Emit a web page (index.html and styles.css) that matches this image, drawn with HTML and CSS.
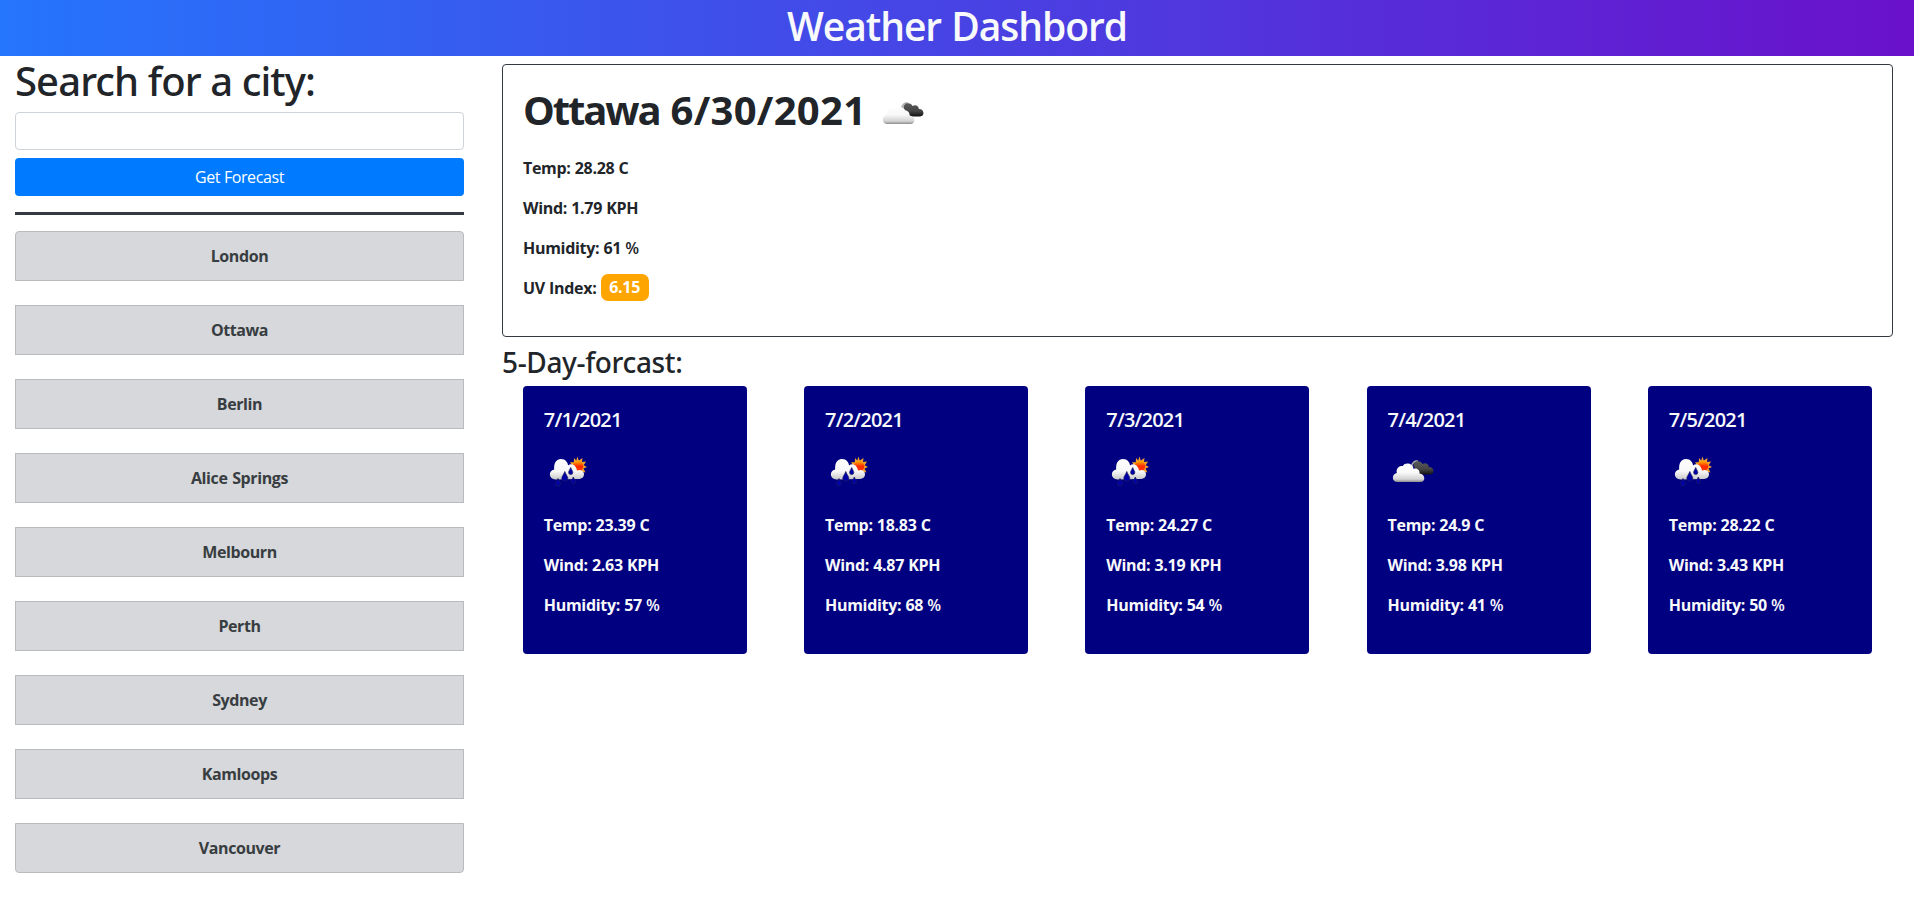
FILE: index.html
```html
<!DOCTYPE html>
<html lang="en">
<head>
<meta charset="utf-8">
<title>Weather Dashbord</title>
<link rel="stylesheet" href="styles.css">
</head>
<body>
<svg class="defs" width="0" height="0" aria-hidden="true">
  <defs>
    <linearGradient id="cloud" x1="0" y1="0" x2="0" y2="1">
      <stop offset="0" stop-color="#fff"/><stop offset=".5" stop-color="#f8f8f8"/><stop offset=".85" stop-color="#d2d2d2"/><stop offset="1" stop-color="#8c8c8c"/>
    </linearGradient>
    <linearGradient id="bright" x1="0" y1="0" x2="0" y2="1">
      <stop offset="0" stop-color="#fff"/><stop offset=".6" stop-color="#f8f8f8"/><stop offset="1" stop-color="#c8c8c8"/>
    </linearGradient>
    <linearGradient id="dark" x1="0" y1="0" x2="0" y2="1">
      <stop offset="0" stop-color="#5a5a5a"/><stop offset=".6" stop-color="#444"/><stop offset="1" stop-color="#111"/>
    </linearGradient>
    <linearGradient id="sun" x1="0" y1="0" x2="0" y2="1">
      <stop offset="0" stop-color="#ffb000"/><stop offset=".5" stop-color="#ff2a00"/><stop offset="1" stop-color="#ff3c00"/>
    </linearGradient>
    <symbol id="clouds" viewBox="0 0 50 50">
      <path d="M23.500 21C24 16.500 27 14.500 30 15.200" fill="none" stroke="#aaa" stroke-width="1.500"/>
      <path d="M25.500 20C25 15 32.500 13.500 34.500 18C38 16 41 18.500 40.800 21C46 20.500 47.500 28 42 28.500H32C31 26 29.500 25.500 28.500 25.500C28 22.500 26.500 21.500 25.500 20Z" fill="url(#dark)"/>
      <path d="M9.500 36C3.500 36 3.500 28 8.800 27C7.500 21 13 19.500 14.800 20C17 15.800 25 17 25.600 23C29 21.500 32 24.500 31.500 27.500C37.500 28 38 36 32.500 36Z" fill="url(#cloud)"/>
    </symbol>
    <symbol id="rain" viewBox="0 0 50 50">
      <path d="M33.300 10.500L34.800 14.500L38.500 12L38 16L42 15.500L39.700 19.200L43 21L39.500 22.500L41.500 26.500L37 25.600L36 29L33.300 26.500L30 28L29.800 24L26 23L28.500 20L26 16.300L29.800 16.300L30 12L32.300 14.500Z" fill="#f4a22a"/>
      <circle cx="34" cy="20.300" r="5.300" fill="url(#sun)"/>
      <path d="M11.500 33.500C4.500 33.500 4 24.500 10.200 23.500C9.800 18 11.500 13.200 17 13C21.500 13 24 16.500 24 19.500C27 17 32 18.500 33 24.500C37.500 22.500 41.500 26 39.500 30.500C38.500 32.700 36 33 33 33Z" fill="url(#bright)"/>
      <path d="M20.800 25.500C19.500 29 17.800 30.300 17.800 32.300A3 3 0 0 0 23.800 32.300C23.800 30.300 22 29 20.800 25.500ZM26.700 21.500C25.700 24 24.600 25 24.600 26.500A2.100 2.100 0 0 0 28.800 26.500C28.800 25 27.700 24 26.700 21.500ZM14 32.500C13 35 11.400 36 11.400 37.500A2.500 2.500 0 0 0 16.400 37.500C16.400 36 15 35 14 32.500ZM29.300 31C28.300 33.500 27.200 34.500 27.200 35.800A2.100 2.100 0 0 0 31.400 35.800C31.400 34.500 30.300 33.500 29.300 31Z" fill="#0000a8" stroke="#1c1c58" stroke-width=".7"/>
    </symbol>
  </defs>
</svg>
<header class="banner"><h1 class="title">Weather Dashbord</h1></header>
<div class="layout">
  <aside class="sidebar">
    <h1 class="search-title">Search for a city:</h1>
    <input class="field" type="text" aria-label="City">
    <button class="submit" type="button">Get Forecast</button>
    <hr class="rule">
    <ul class="cities">
      <li>London</li><li>Ottawa</li><li>Berlin</li><li>Alice Springs</li><li>Melbourn</li><li>Perth</li><li>Sydney</li><li>Kamloops</li><li>Vancouver</li>
    </ul>
  </aside>
  <main class="weather">
    <section class="today">
      <h1 class="today-title"><span class="city">Ottawa</span><span class="date">6/30/2021</span><svg class="icon"><use href="#clouds"/></svg></h1>
      <p>Temp: 28.28 C</p>
      <p>Wind: 1.79 KPH</p>
      <p>Humidity: 61 <span class="pct">%</span></p>
      <p>UV Index: <span class="uv">6.15</span></p>
    </section>
    <h3 class="forecast-title">5-Day-forcast:</h3>
    <section class="days">
      <article class="day"><h5>7/1/2021</h5><svg class="icon"><use href="#rain"/></svg><p>Temp: 23.39 C</p><p>Wind: 2.63 KPH</p><p>Humidity: 57 <span class="pct">%</span></p></article>
      <article class="day"><h5>7/2/2021</h5><svg class="icon"><use href="#rain"/></svg><p>Temp: 18.83 C</p><p>Wind: 4.87 KPH</p><p>Humidity: 68 <span class="pct">%</span></p></article>
      <article class="day"><h5>7/3/2021</h5><svg class="icon"><use href="#rain"/></svg><p>Temp: 24.27 C</p><p>Wind: 3.19 KPH</p><p>Humidity: 54 <span class="pct">%</span></p></article>
      <article class="day"><h5>7/4/2021</h5><svg class="icon"><use href="#clouds"/></svg><p>Temp: 24.9 C</p><p>Wind: 3.98 KPH</p><p>Humidity: 41 <span class="pct">%</span></p></article>
      <article class="day"><h5>7/5/2021</h5><svg class="icon"><use href="#rain"/></svg><p>Temp: 28.22 C</p><p>Wind: 3.43 KPH</p><p>Humidity: 50 <span class="pct">%</span></p></article>
    </section>
  </main>
</div>
</body>
</html>
```
FILE: styles.css
```css
*, *::before, *::after { box-sizing: border-box; }
body { margin: 0; background: #fff; color: #212529; font: 400 16px/24px "Segoe UI", "Open Sans", "Noto Sans", sans-serif; }
h1, h3, h5, p { margin: 0; }
.defs { position: absolute; }
.banner { height: 56px; padding-top: 2px; background: linear-gradient(to right, #2575fc, #6a11cb); }
.title { font-size: 39px; line-height: 48px; font-weight: 600; text-align: center; color: #f8f9fa; letter-spacing: -1.05px; word-spacing: 1px; }
.layout { display: flex; }
.sidebar { width: 479px; padding: 0 15px; }
.search-title { height: 48px; margin-bottom: 8px; padding-top: 1px; font-family: "Segoe UI", "Noto Sans", sans-serif; font-size: 40px; line-height: 48px; font-weight: 500; white-space: nowrap; letter-spacing: -0.9px; }
.field { display: block; width: 449px; height: 38px; border: 1px solid #ced4da; border-radius: 4px; background: #fff; }
.submit { display: block; width: 449px; height: 38px; margin-top: 8px; padding: 0; border: 0; border-radius: 4px; background: #007bff; color: #fff; font: inherit; letter-spacing: -0.4px; }
.rule { height: 3px; margin: 16px 0; border: 0; background: #343a40; width: 449px; }
.cities { display: flex; flex-direction: column; gap: 24px; width: 449px; margin: 0; padding: 0; list-style: none; }
.cities li { height: 50px; padding: 12px 0; border: 1px solid #b9bbbe; background: #d6d8db; color: #383d41; text-align: center; font-weight: 700; letter-spacing: -0.4px; word-spacing: 1px; }
.cities li:first-child { border-radius: 4px 4px 0 0; }
.cities li:last-child { border-radius: 0 0 4px 4px; }
.weather { width: 1391px; margin-left: 23px; padding-top: 8px; }
.today { height: 273px; padding: 20px; border: 1px solid #343a40; border-radius: 4px; }
.today-title { display: flex; height: 71px; padding-top: 1px; font-size: 40px; line-height: 48px; font-weight: 700; }
.city { letter-spacing: -2.1px; }
.date { margin-left: 11px; letter-spacing: 0.3px; }
.today-title .icon { margin: 2px 0 0 12px; }
.icon { display: block; width: 50px; height: 50px; }
p { height: 24px; margin-bottom: 16px; font-weight: 700; letter-spacing: -0.3px; word-spacing: 0.3px; }
.pct { font-weight: 600; }
.uv { display: inline-block; width: 48px; height: 27px; margin-top: -2px; border-radius: 7px; background: orange; color: #fff; text-align: center; line-height: 27px; vertical-align: 1px; }
.forecast-title { height: 49px; padding-top: 8px; font-family: "Segoe UI", "Noto Sans", sans-serif; font-size: 28px; line-height: 34px; font-weight: 500; letter-spacing: -0.35px; }
.days { display: flex; justify-content: space-between; padding: 0 21.2px 0 20.8px; }
.day { width: 224px; height: 268px; padding: 21px; border-radius: 4px; background: navy; color: #f8f9fa; }
.day h5 { height: 24px; padding-top: 1px; font-size: 20px; line-height: 24px; font-weight: 600; letter-spacing: -0.8px; }
.day .icon { margin: 15px 0 17px; }
```
